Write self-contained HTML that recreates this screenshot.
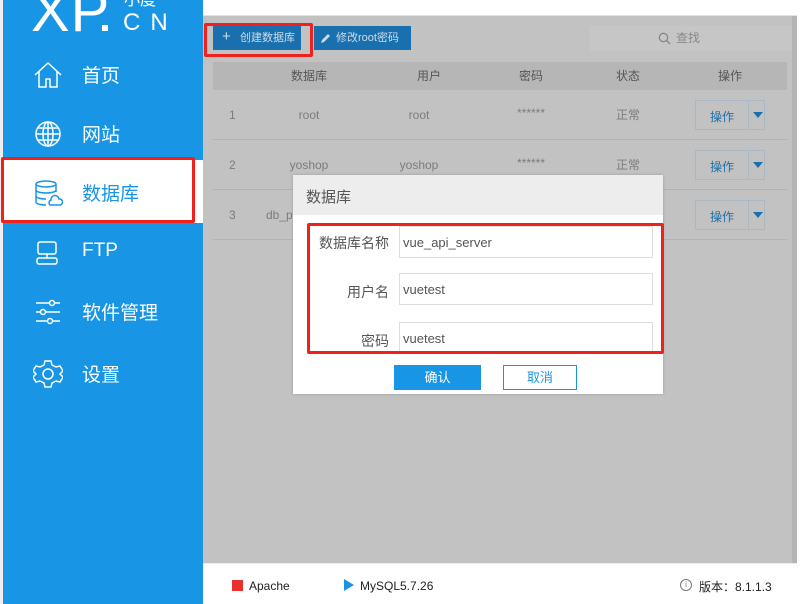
<!DOCTYPE html>
<html><head><meta charset="utf-8"><style>
*{margin:0;padding:0;box-sizing:border-box}
body{width:807px;height:604px;overflow:hidden;background:#fff;font-family:"Liberation Sans","Noto Sans CJK SC",sans-serif;position:relative}
.abs{position:absolute}
#side{left:3px;top:0;width:200px;height:604px;background:#1895e5}
.nav{position:absolute;left:0;width:200px;height:60px;color:#fff;font-size:19px}
.nav svg{position:absolute;left:30px;top:15px}
.nav span{position:absolute;left:79px;top:16px}
#main{left:203px;top:16px;width:594px;height:547px;background:#c2c2c2}
.btn{position:absolute;top:10px;height:24px;background:#1a70ae;color:#c9dcea;font-size:11px;line-height:24px}
.th{position:absolute;top:46px;left:10px;width:574px;height:28px;background:#b6b6b6}
.row{position:absolute;left:10px;width:574px;height:50px;border-bottom:1px solid #b3b3b3}
.c{position:absolute;font-size:12px;color:#7c7c7c;text-align:center;line-height:14px}
.op{position:absolute;left:482px;top:10px;width:70px;height:30px;border:1px solid #a9b8c4}
.op b{position:absolute;left:0;width:52px;top:7px;text-align:center;font-weight:normal;color:#1e6fa9;font-size:12px}
.op i{position:absolute;left:52px;top:0;width:1px;height:28px;background:#a9b8c4}
.op u{position:absolute;left:57px;top:11px;border-left:5px solid transparent;border-right:5px solid transparent;border-top:6px solid #1a70ae}
#dlg{left:293px;top:175px;width:370px;height:219px;background:#fff;box-shadow:0 0 3px rgba(0,0,0,.2)}
.lbl{position:absolute;right:274px;font-size:14px;color:#555}
.inp{position:absolute;left:106px;width:254px;height:32px;border:1px solid #ddd;font-size:13px;color:#555;padding:8px 3px}
.red{position:absolute;border:3px solid #f0211c;border-radius:2px}
</style></head><body>
<div class="abs" style="left:0;top:0;width:3px;height:604px;background:#eee"></div>
<div id="side" class="abs">
 <div class="abs" style="left:28px;top:-22px;color:#fff;font-size:58px;letter-spacing:1px">XP</div>
 <div class="abs" style="left:99px;top:25px;width:6px;height:6px;background:#fff"></div>
 <div class="abs" style="left:121px;top:-14px;color:#fff;font-size:16px">小度</div>
 <div class="abs" style="left:120px;top:9px;color:#fff;font-size:24px;letter-spacing:10px">CN</div>
 <div class="nav" style="top:45px"><svg width="30" height="30" viewBox="0 0 30 30" fill="none" stroke="#fff" stroke-width="1.5"><path d="M2 15L15 3 28 15M6 12v15h7v-8h4v8h7V12"/></svg><span>首页</span></div>
 <div class="nav" style="top:104px"><svg width="30" height="30" viewBox="0 0 30 30" fill="none" stroke="#fff" stroke-width="1.5"><circle cx="15" cy="15" r="12"/><ellipse cx="15" cy="15" rx="5" ry="12"/><path d="M3 15h24M5 9h20M5 21h20M15 3v24"/></svg><span>网站</span></div>
 <div class="abs" style="left:0;top:160px;width:200px;height:63px;background:#fff"></div>
 <div class="nav" style="top:163px;color:#1895e5"><svg width="30" height="30" viewBox="0 0 30 30" fill="none" stroke="#1895e5" stroke-width="1.5"><ellipse cx="13" cy="6" rx="10" ry="3"/><path d="M3 6v18c0 2 5 3 10 3M23 6v8M3 12c0 2 5 3 10 3s10-1 10-3M3 18c0 2 5 3 10 3"/><path d="M17 27h10a3 3 0 0 0-1-6a4 4 0 0 0-8 1a3 3 0 0 0-1 5z"/></svg><span>数据库</span></div>
 <div class="red" style="left:-2px;top:157px;width:194px;height:66px"></div>
 <div class="nav" style="top:224px"><svg width="30" height="30" viewBox="0 0 30 30" fill="none" stroke="#fff" stroke-width="1.5"><rect x="5" y="3" width="18" height="12" rx="2"/><path d="M14 15v4"/><rect x="4" y="19" width="20" height="6" rx="2"/></svg><span>FTP</span></div>
 <div class="nav" style="top:282px"><svg width="30" height="30" viewBox="0 0 30 30" fill="none" stroke="#fff" stroke-width="1.5"><path d="M3 6h24M3 15h24M3 24h24"/><circle cx="19" cy="6" r="2.5" fill="#1895e5"/><circle cx="10" cy="15" r="2.5" fill="#1895e5"/><circle cx="17" cy="24" r="2.5" fill="#1895e5"/></svg><span>软件管理</span></div>
 <div class="nav" style="top:344px"><svg width="30" height="30" viewBox="0 0 30 30" fill="none" stroke="#fff" stroke-width="1.5"><path d="M12 2h6l1 4 4 2 4-1 3 5-3 3v0l3 3-3 5-4-1-4 2-1 4h-6l-1-4-4-2-4 1-3-5 3-3-3-3 3-5 4 1 4-2z"/><circle cx="15" cy="15" r="5"/></svg><span>设置</span></div>
</div>
<div class="abs" style="left:203px;top:0;width:594px;height:16px;background:#fff;border-bottom:1px solid #e2e2e2"></div>
<div id="main" class="abs">
 <div class="btn" style="left:10px;width:88px"><span style="position:absolute;left:9px;top:-1px;font-size:15px">+</span><span style="position:absolute;left:27px">创建数据库</span></div>
 <div class="btn" style="left:111px;width:97px"><svg style="position:absolute;left:6px;top:6px" width="12" height="12" viewBox="0 0 12 12"><path d="M1 11l1-3 6-6 2 2-6 6z" fill="#c9dcea"/></svg><span style="position:absolute;left:22px">修改root密码</span></div>
 <div class="abs" style="left:387px;top:10px;width:202px;height:25px;background:#c6c6c6;color:#888;font-size:12px;line-height:25px"><svg style="position:absolute;left:68px;top:6px" width="13" height="13" viewBox="0 0 13 13" fill="none" stroke="#888" stroke-width="1.3"><circle cx="5.5" cy="5.5" r="4.2"/><path d="M8.5 8.5l3.5 3.5"/></svg><span style="position:absolute;left:86px">查找</span></div>
 <div class="th"><div class="c" style="left:66px;top:7px;width:60px;color:#555">数据库</div><div class="c" style="left:186px;top:7px;width:60px;color:#555">用户</div><div class="c" style="left:288px;top:7px;width:60px;color:#555">密码</div><div class="c" style="left:385px;top:7px;width:60px;color:#555">状态</div><div class="c" style="left:487px;top:7px;width:60px;color:#555">操作</div></div>
 <div class="row" style="top:74px"><div class="c" style="left:16px;top:18px">1</div><div class="c" style="left:56px;top:18px;width:80px">root</div><div class="c" style="left:166px;top:18px;width:80px">root</div><div class="c" style="left:288px;top:16px;width:60px">******</div><div class="c" style="left:385px;top:18px;width:60px">正常</div><div class="op"><b>操作</b><i></i><u></u></div></div>
 <div class="row" style="top:124px"><div class="c" style="left:16px;top:18px">2</div><div class="c" style="left:56px;top:18px;width:80px">yoshop</div><div class="c" style="left:166px;top:18px;width:80px">yoshop</div><div class="c" style="left:288px;top:16px;width:60px">******</div><div class="c" style="left:385px;top:18px;width:60px">正常</div><div class="op"><b>操作</b><i></i><u></u></div></div>
 <div class="row" style="top:174px"><div class="c" style="left:16px;top:18px">3</div><div class="c" style="left:53px;top:18px">db_petl</div><div class="op"><b>操作</b><i></i><u></u></div></div>
</div>
<div class="abs" style="left:792px;top:16px;width:5px;height:547px;background:#b5b5b5"></div>
<div class="red" style="left:204px;top:23px;width:109px;height:34px"></div>
<div id="dlg" class="abs">
 <div class="abs" style="left:0;top:0;width:370px;height:40px;background:#ededed;font-size:15px;color:#555;padding:11px 13px">数据库</div>
 <div class="lbl" style="top:58px">数据库名称</div><div class="inp" style="top:51px">vue_api_server</div>
 <div class="lbl" style="top:107px">用户名</div><div class="inp" style="top:98px">vuetest</div>
 <div class="lbl" style="top:156px">密码</div><div class="inp" style="top:147px;height:30px">vuetest</div>
 <div class="abs" style="left:101px;top:190px;width:87px;height:25px;background:#1895e5;color:#fff;font-size:13px;text-align:center;line-height:25px">确认</div>
 <div class="abs" style="left:210px;top:190px;width:74px;height:25px;border:1px solid #1895e5;color:#1895e5;font-size:13px;text-align:center;line-height:23px">取消</div>
</div>
<div class="red" style="left:307px;top:223px;width:357px;height:131px"></div>
<div class="abs" style="left:203px;top:563px;width:594px;height:41px;background:#fff;border-top:1px solid #eee;font-size:12px;color:#222">
 <div class="abs" style="left:29px;top:16px;width:11px;height:11px;background:#e8312f"></div><div class="abs" style="left:46px;top:15px">Apache</div>
 <div class="abs" style="left:141px;top:15px;border-top:6px solid transparent;border-bottom:6px solid transparent;border-left:10px solid #1895e5"></div><div class="abs" style="left:157px;top:15px">MySQL5.7.26</div>
 <div class="abs" style="left:477px;top:15px;width:12px;height:12px;border:1px solid #777;border-radius:50%;font-size:8px;text-align:center;line-height:10px;color:#777">i</div><div class="abs" style="left:496px;top:14px">版本：8.1.1.3</div>
</div>
</body></html>
